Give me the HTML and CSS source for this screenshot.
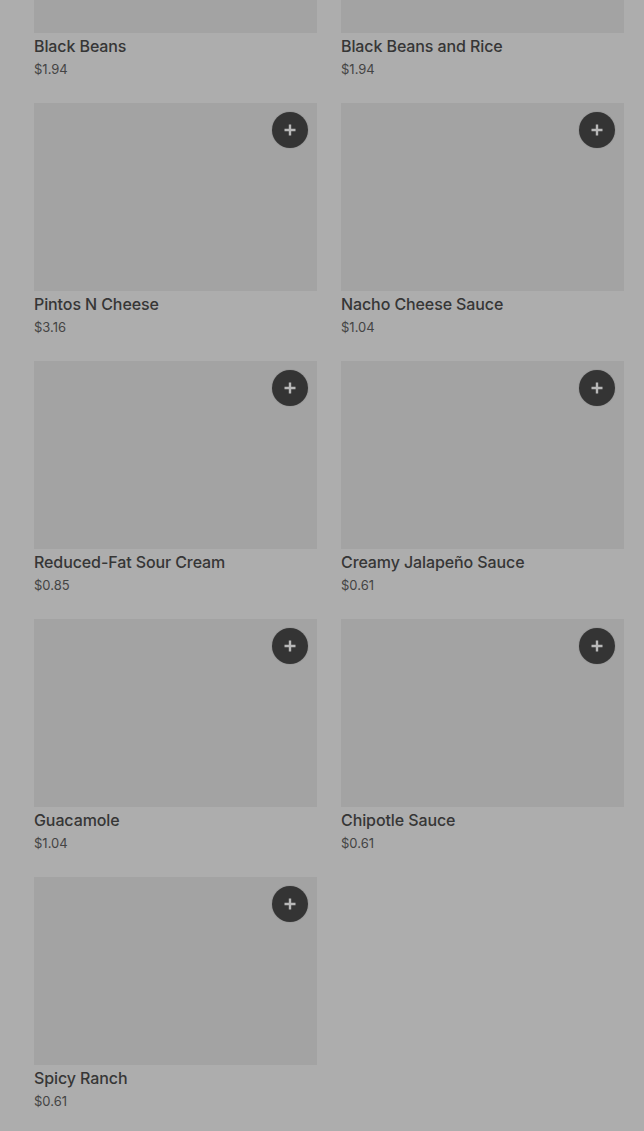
FILE: index.html
```html
<!DOCTYPE html>
<html lang="en">
<head>
  <meta charset="UTF-8">
  <title>Menu - Sides</title>
  <link rel="stylesheet" href="styles.css">
</head>
<body>

  <div class="overlay">
    <!-- Lista de productos -->
    <ul class="menu-grid">
      <li class="item">
        <div class="item-img"></div>
        <div class="item-name">Black Beans</div>
        <div class="item-price">$1.94</div>
      </li>
      <li class="item">
        <div class="item-img"></div>
        <div class="item-name">Black Beans and Rice</div>
        <div class="item-price">$1.94</div>
      </li>
      <li class="item">
        <div class="item-img"><button class="add-btn" aria-label="Add"><svg viewBox="0 0 14 14"><path d="M7 1.5v11M1.5 7h11"/></svg></button></div>
        <div class="item-name">Pintos N Cheese</div>
        <div class="item-price">$3.16</div>
      </li>
      <li class="item">
        <div class="item-img"><button class="add-btn" aria-label="Add"><svg viewBox="0 0 14 14"><path d="M7 1.5v11M1.5 7h11"/></svg></button></div>
        <div class="item-name">Nacho Cheese Sauce</div>
        <div class="item-price">$1.04</div>
      </li>
      <li class="item">
        <div class="item-img"><button class="add-btn" aria-label="Add"><svg viewBox="0 0 14 14"><path d="M7 1.5v11M1.5 7h11"/></svg></button></div>
        <div class="item-name">Reduced-Fat Sour Cream</div>
        <div class="item-price">$0.85</div>
      </li>
      <li class="item">
        <div class="item-img"><button class="add-btn" aria-label="Add"><svg viewBox="0 0 14 14"><path d="M7 1.5v11M1.5 7h11"/></svg></button></div>
        <div class="item-name">Creamy Jalapeño Sauce</div>
        <div class="item-price">$0.61</div>
      </li>
      <li class="item">
        <div class="item-img"><button class="add-btn" aria-label="Add"><svg viewBox="0 0 14 14"><path d="M7 1.5v11M1.5 7h11"/></svg></button></div>
        <div class="item-name">Guacamole</div>
        <div class="item-price">$1.04</div>
      </li>
      <li class="item">
        <div class="item-img"><button class="add-btn" aria-label="Add"><svg viewBox="0 0 14 14"><path d="M7 1.5v11M1.5 7h11"/></svg></button></div>
        <div class="item-name">Chipotle Sauce</div>
        <div class="item-price">$0.61</div>
      </li>
      <li class="item">
        <div class="item-img"><button class="add-btn" aria-label="Add"><svg viewBox="0 0 14 14"><path d="M7 1.5v11M1.5 7h11"/></svg></button></div>
        <div class="item-name">Spicy Ranch</div>
        <div class="item-price">$0.61</div>
      </li>
    </ul>
  </div>

</body>
</html>
```

FILE: styles.css
```css
body {
  margin: 0;
  background: #adadad;
  font-family: Inter, "Noto Sans", Arial, sans-serif;
  color: #383838;
}

.overlay {
  height: 1131px;
  overflow: hidden;
}

.menu-grid {
  list-style: none;
  margin: -155px 0 0;
  padding: 0 20px 0 34px;
  display: grid;
  grid-template-columns: 283px 283px;
  column-gap: 24px;
  row-gap: 25px;
}

.item-img {
  position: relative;
  height: 188px;
  background: #a3a3a3;
}

.add-btn {
  position: absolute;
  top: 9px;
  right: 9px;
  width: 36px;
  height: 36px;
  border: none;
  border-radius: 50%;
  background: #343434;
  padding: 0;
  display: flex;
  align-items: center;
  justify-content: center;
  box-shadow: 0 0 0 1px rgba(0, 0, 0, 0.05);
}

.add-btn svg {
  width: 14px;
  height: 14px;
  fill: none;
  stroke: #b8b8b8;
  stroke-width: 2.4;
}

.item-name {
  margin-top: 3px;
  font-size: 16px;
  line-height: 20px;
  font-weight: 500;
  letter-spacing: -0.1px;
  color: #363636;
}

.item-price {
  margin-top: 4px;
  font-size: 13px;
  line-height: 18px;
  color: #444;
}
```
